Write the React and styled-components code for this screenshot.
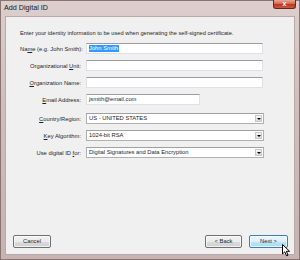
import React from 'react'
import styled, { createGlobalStyle } from 'styled-components'

const Global = createGlobalStyle`
  html, body { margin: 0; padding: 0; }
  body { width: 300px; height: 260px; overflow: hidden; background: #cdbcba; }
  * { box-sizing: border-box; }
`

const Window = styled.div`
  width: 300px;
  height: 260px;
  display: flex;
  flex-direction: column;
  background: linear-gradient(180deg, #dccfcd 0%, #cfbebc 40%, #c7b3b1 100%);
  border: 1px solid #8a7472;
  font-family: "Liberation Sans", Arial, sans-serif;
  color: #1e1e1e;
  position: relative;
`

const TitleBar = styled.div`
  height: 15px;
  display: flex;
  align-items: flex-start;
  justify-content: space-between;
  padding-left: 3px;
`

const Title = styled.div`
  font-size: 7.2px;
  line-height: 13px;
  color: #1a1a1a;
`

const CloseBtn = styled.div`
  width: 23px;
  height: 9px;
  margin-right: 3px;
  margin-top: -1px;
  border: 1px solid #6b2418;
  border-top: none;
  border-radius: 0 0 3px 3px;
  background: linear-gradient(180deg, #e6a696 0%, #d56a55 45%, #c0361f 55%, #c85a40 100%);
  color: #fff;
  font-size: 7px;
  font-weight: bold;
  line-height: 8px;
  text-align: center;
`

const Client = styled.div`
  flex: 1;
  margin: 0 4px 4px 4px;
  background: #f0f0f0;
  border: 1px solid #b9a9a7;
  display: flex;
  flex-direction: column;
  padding: 12px 6px 6px 14px;
`

const Intro = styled.div`
  font-size: 5.7px;
  line-height: 8px;
  margin-bottom: 6px;
`

const Form = styled.div`
  display: grid;
  grid-template-columns: 61px 178px;
  column-gap: 5px;
  row-gap: 6px;
  align-items: center;
  flex: 1;
  align-content: start;
`

const Label = styled.div`
  font-size: 5.8px;
  text-align: right;
  white-space: nowrap;
  margin-top: ${p => p.$push || 0}px;
  u { text-decoration: underline; }
`

const Field = styled.div`
  height: 11px;
  width: ${p => p.$w || 177}px;
  margin-top: ${p => p.$push || 0}px;
  background: #fff;
  border: 1px solid #e0e1e6;
  border-top-color: #9a9ca3;
  font-size: 5.8px;
  line-height: 9px;
  padding-left: 2px;
  display: flex;
  align-items: center;
  white-space: nowrap;
  overflow: hidden;
`

const Selected = styled.span`
  background: #3399ff;
  color: #fff;
  line-height: 7px;
  padding: 0 1px 0 0;
`

const Select = styled(Field)`
  width: 178px;
  border-color: #b0b0b0;
  border-top-color: #a0a0a0;
  justify-content: space-between;
  padding-right: 1px;
`

const Arrow = styled.div`
  width: 7px;
  height: 7px;
  background: linear-gradient(180deg, #f6f6f6 0%, #dadada 100%);
  border: 1px solid #c8c8c8;
  display: flex;
  align-items: center;
  justify-content: center;
  &::after {
    content: '';
    border-left: 2px solid transparent;
    border-right: 2px solid transparent;
    border-top: 2px solid #000;
  }
`

const Footer = styled.div`
  display: flex;
  align-items: center;
  margin-left: -7px;
  gap: 7px;
`

const Button = styled.div`
  width: ${p => p.$w}px;
  height: 13px;
  border: 1px solid ${p => (p.$hot ? '#3c7fb1' : '#707070')};
  border-radius: 2px;
  background: ${p =>
    p.$hot
      ? 'linear-gradient(180deg, #eaf6fd 0%, #d9f0fc 50%, #bee6fd 51%, #a7d9f5 100%)'
      : 'linear-gradient(180deg, #f2f2f2 0%, #ebebeb 50%, #dddddd 51%, #cfcfcf 100%)'};
  box-shadow: inset 0 0 0 1px rgba(255, 255, 255, 0.7);
  font-size: 5.8px;
  line-height: 11px;
  text-align: center;
  margin-left: ${p => (p.$auto ? 'auto' : '0')};
`

const Cursor = styled.svg`
  position: absolute;
  left: 281px;
  top: 243px;
`

const rows = [
  { label: <>Na<u>m</u>e (e.g. John Smith):</>, value: <Selected>John Smith</Selected> },
  { label: <>Organizational <u>U</u>nit:</>, value: '' },
  { label: <><u>O</u>rganization Name:</>, value: '' },
  { label: <><u>E</u>mail Address:</>, value: 'jsmith@email.com', w: 114 },
]

const selects = [
  { label: <><u>C</u>ountry/Region:</>, value: 'US - UNITED STATES', push: 2 },
  { label: <><u>K</u>ey Algorithm:</>, value: '1024-bit RSA' },
  { label: <>Use digital ID <u>f</u>or:</>, value: 'Digital Signatures and Data Encryption' },
]

export default function App() {
  return (
    <Window>
      <Global />
      <TitleBar>
        <Title>Add Digital ID</Title>
        <CloseBtn>x</CloseBtn>
      </TitleBar>
      <Client>
        <Intro>Enter your identity information to be used when generating the self-signed certificate.</Intro>
        <Form>
          {rows.map((r, i) => (
            <React.Fragment key={i}>
              <Label>{r.label}</Label>
              <Field $w={r.w}>{r.value}</Field>
            </React.Fragment>
          ))}
          {selects.map((s, i) => (
            <React.Fragment key={'s' + i}>
              <Label $push={s.push}>{s.label}</Label>
              <Select $push={s.push}>
                <span>{s.value}</span>
                <Arrow />
              </Select>
            </React.Fragment>
          ))}
        </Form>
        <Footer>
          <Button $w={38}>Cancel</Button>
          <Button $w={37} $auto>&lt; Back</Button>
          <Button $w={39} $hot>Next &gt;</Button>
        </Footer>
      </Client>
      <Cursor width="9" height="13" viewBox="0 0 9 13">
        <path d="M0.5 0.5 L0.5 10 L2.8 7.8 L4.5 11.8 L6 11.2 L4.4 7.3 L7.6 7.3 Z" fill="#fff" stroke="#000" strokeWidth="1" />
      </Cursor>
    </Window>
  )
}
